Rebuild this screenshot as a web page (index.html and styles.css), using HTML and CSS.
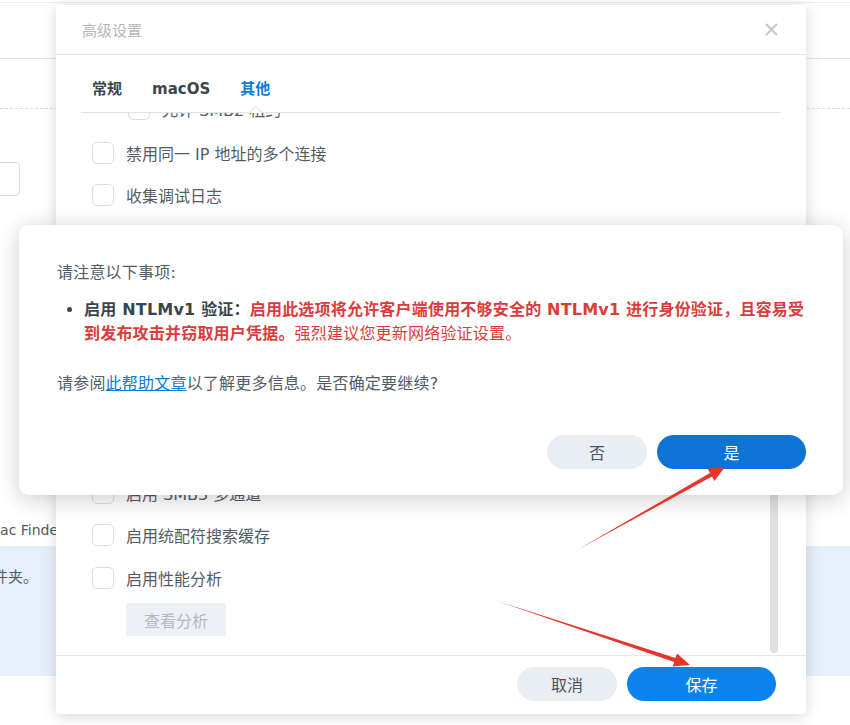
FILE: index.html
```html
<!DOCTYPE html>
<html lang="zh-CN">
<head>
  <meta charset="UTF-8" />
  <title>高级设置</title>
  <link rel="stylesheet" href="styles.css">
</head>
<body>

  <div class="bg">
    <div class="bg-top"></div>
    <div class="bg-head"></div>
    <div class="bg-row"></div>
    <div class="bg-field"></div>
    <p class="bg-text">Mac Finder</p>
    <div class="bg-note"><p>文件夹。</p></div>
  </div>

  <div class="win">
    <div class="win-head">
      <span class="win-title">高级设置</span>
      <svg class="close" width="13" height="13" viewBox="0 0 13 13">
        <path d="M1 1 L12 12 M12 1 L1 12" stroke="#c3c7cb" stroke-width="1.8" fill="none" />
      </svg>
    </div>

    <div class="tabs">
      <span class="tab">常规</span>
      <span class="tab">macOS</span>
      <span class="tab active">其他</span>
    </div>

    <div class="scroll">
      <div class="list">
        <div class="item sub"><span class="check"></span>允许 SMB2 租约</div>
        <div class="item"><span class="check"></span>禁用同一 IP 地址的多个连接</div>
        <div class="item"><span class="check"></span>收集调试日志</div>
        <div class="item"><span class="check"></span>启用 DirSort VFS 模块</div>
        <div class="item"><span class="check"></span>启用 SMB 持久句柄</div>
        <div class="item"><span class="check"></span>启用 Opportunistic Locking</div>
        <div class="item"><span class="check"></span>允许服务器端复制</div>
        <div class="item"><span class="check"></span>启用 NTLMv1 验证</div>
        <div class="item"><span class="check"></span>启用 SMB 传输加密</div>
        <div class="item"><span class="check"></span>启用 SMB3 多通道</div>
        <div class="item"><span class="check"></span>启用统配符搜索缓存</div>
        <div class="item"><span class="check"></span>启用性能分析</div>
        <button class="btn-off">查看分析</button>
      </div>
      <div class="thumb"></div>
    </div>

    <div class="win-foot">
      <button class="btn btn-gray">取消</button>
      <button class="btn btn-blue">保存</button>
    </div>
  </div>

  <div class="confirm">
    <p>请注意以下事项:</p>
    <ul>
      <li><b>启用 NTLMv1 验证：</b><span class="warn">启用此选项将允许客户端使用不够安全的 NTLMv1 进行身份验证，且容易受<br>到发布攻击并窃取用户凭据。</span><span class="warn-soft">强烈建议您更新网络验证设置。</span></li>
    </ul>
    <p class="help">请参阅<a href="#">此帮助文章</a>以了解更多信息。是否确定要继续?</p>
    <div class="actions">
      <button class="btn btn-gray">否</button>
      <button class="btn btn-blue yes">是</button>
    </div>
  </div>

  <!-- flechas de anotación -->
  <svg class="arrows" width="850" height="725" viewBox="0 0 850 725">
    <polygon points="577,550 710,473.1 707.6,468.7 725,467 714.4,480.9 712,476.5" fill="#e8352b" />
    <polygon points="497,601 675.4,658.1 677,653.4 690,665 672.6,666.6 674.2,661.9" fill="#e8352b" />
  </svg>

</body>
</html>
```

FILE: styles.css
```css
* {
  box-sizing: border-box;
}

body {
  margin: 0;
  width: 850px;
  height: 725px;
  overflow: hidden;
  position: relative;
  background: #fff;
  font-family: "DejaVu Sans", "Noto Sans CJK SC", sans-serif;
  color: #414b55;
}

/* pagina de fondo */
.bg-top {
  height: 3px;
  border-bottom: 1px solid #eceef0;
}

.bg-head {
  height: 56px;
  border-bottom: 1px solid #e3e6e9;
}

.bg-row {
  height: 50px;
  border-bottom: 1px dashed #d9dde1;
}

.bg-field {
  margin-top: 53px;
  margin-left: -20px;
  width: 40px;
  height: 34px;
  border: 1px solid #d5dade;
  border-radius: 4px;
}

.bg-text {
  margin: 324px 0 0 -12px;
  font-size: 14px;
  line-height: 20px;
  color: #505a64;
}

.bg-note {
  margin-top: 6px;
  height: 130px;
  background: #e6f0fb;
  padding-top: 21px;
}

.bg-note p {
  margin: 0 0 0 -22px;
  font-size: 15px;
  line-height: 20px;
  color: #505a64;
}

/* ventana de ajustes */
.win {
  position: absolute;
  left: 56px;
  top: 5px;
  width: 750px;
  height: 709px;
  background: #fff;
  border-radius: 4px;
  box-shadow: 0 2px 16px rgba(0, 0, 0, 0.16);
  display: flex;
  flex-direction: column;
}

.win-head {
  height: 50px;
  flex: none;
  border-bottom: 1px solid #e6e9ec;
  display: flex;
  align-items: center;
  justify-content: space-between;
  padding: 0 28px 0 26px;
}

.win-title {
  font-size: 15px;
  color: #b3b8bd;
}

.tabs {
  height: 58px;
  flex: none;
  margin: 0 25px;
  padding: 10px 0 0 11px;
  border-bottom: 1px solid #e1e4e7;
  display: flex;
  align-items: center;
  gap: 30px;
}

.tab {
  font-size: 15px;
  line-height: 20px;
  font-weight: bold;
  color: #3b4550;
}

.tab.active {
  position: relative;
  color: #0b7dd8;
}

.tab.active::after {
  content: "";
  position: absolute;
  left: 50%;
  top: 29px;
  width: 10px;
  height: 10px;
  margin-left: -5px;
  background: #fff;
  border-top: 1px solid #e1e4e7;
  border-left: 1px solid #e1e4e7;
  transform: rotate(45deg);
}

.scroll {
  flex: 1;
  overflow: hidden;
  position: relative;
}

.list {
  margin-top: -24px;
}

.item {
  height: 42.5px;
  display: flex;
  align-items: center;
  gap: 12px;
  padding-left: 36px;
  font-size: 16px;
  color: #525c66;
}

.item.sub {
  padding: 0 0 3px 72px;
}

.check {
  flex: none;
  width: 22px;
  height: 22px;
  border: 1px solid #dadee3;
  border-radius: 5px;
  background: #fff;
}

.btn-off {
  margin: 4px 0 0 70px;
  width: 100px;
  height: 33px;
  border: none;
  border-radius: 3px;
  background: #edf1f5;
  color: #b3b9bf;
  font-family: inherit;
  font-size: 16px;
}

.thumb {
  position: absolute;
  right: 28px;
  top: 190px;
  bottom: 2px;
  width: 8px;
  border-radius: 4px;
  background: #e0e0e0;
}

.win-foot {
  height: 59px;
  flex: none;
  border-top: 1px solid #e6e9ec;
  display: flex;
  justify-content: flex-end;
  align-items: center;
  gap: 10px;
  padding: 0 30px 2px 0;
}

.btn {
  height: 34px;
  border: none;
  border-radius: 17px;
  font-family: inherit;
  font-size: 16px;
}

.btn-gray {
  width: 100px;
  background: #e8eef4;
  color: #4a545e;
}

.btn-blue {
  width: 149px;
  background: #0a84ec;
  color: #fff;
}

/* dialogo de confirmacion */
.confirm {
  position: absolute;
  left: 19px;
  top: 225px;
  width: 824px;
  height: 270px;
  background: #fff;
  border-radius: 10px;
  box-shadow: 0 4px 24px rgba(0, 0, 0, 0.2);
  padding: 36px 37px 26px 38px;
  display: flex;
  flex-direction: column;
  font-size: 16px;
  line-height: 24px;
  letter-spacing: 0.2px;
}

.confirm p {
  margin: 0;
  color: #525c66;
}

.confirm ul {
  margin: 13px 0 0;
  padding-left: 27px;
  color: #3a444e;
}

.confirm b {
  color: #3a444e;
}

.warn {
  color: #dc3b3b;
  font-weight: bold;
}

.warn-soft {
  color: #dc3b3b;
}

.confirm .help {
  margin-top: 26px;
}

.help a {
  color: #0c7bd6;
}

.actions {
  margin-top: auto;
  display: flex;
  justify-content: flex-end;
  gap: 10px;
}

.actions .btn {
  letter-spacing: 0;
}

.btn-blue.yes {
  background: #0b74d5;
}

.arrows {
  position: absolute;
  left: 0;
  top: 0;
  pointer-events: none;
}
```
